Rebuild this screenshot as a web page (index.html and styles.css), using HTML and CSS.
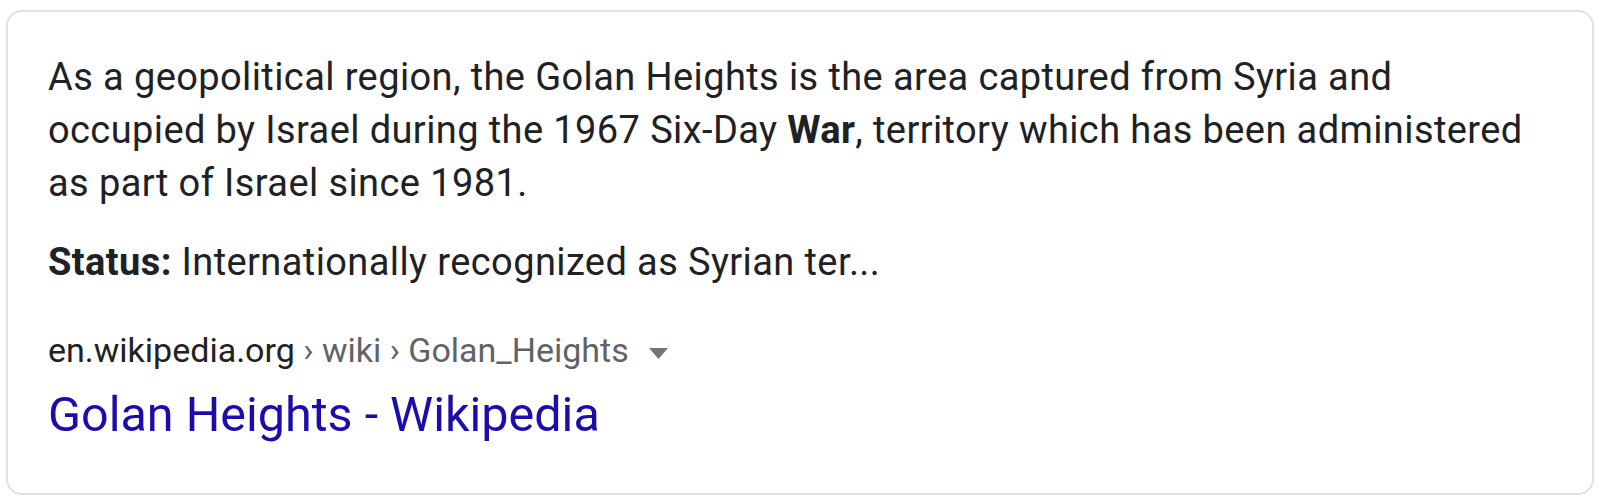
FILE: index.html
```html
<!DOCTYPE html>
<html lang="en">
<head>
<meta charset="utf-8">
<title>Golan Heights - Wikipedia</title>
<link rel="stylesheet" href="styles.css">
</head>
<body>
<div class="card">
  <p class="snippet">As a geopolitical region, the Golan Heights is the area captured from Syria and occupied by Israel during the 1967 Six-Day <b>War</b>, territory which has been administered as part of Israel since 1981.</p>
  <p class="status"><b>Status:</b> Internationally recognized as Syrian ter...</p>
  <div class="cite"><span class="domain">en.wikipedia.org</span><span class="path"> › wiki › Golan_Heights</span><svg class="caret" width="19" height="11" viewBox="0 0 19 11"><path d="M0 0H19L9.5 11Z" fill="#70757a"/></svg></div>
  <a class="title" href="#">Golan Heights - Wikipedia</a>
</div>
</body>
</html>
```
FILE: styles.css
```css
html, body {
  margin: 0;
  padding: 0;
  background: #fff;
}
body {
  padding: 10px 6px 7px 6px;
  font-family: Roboto, "Liberation Sans", Arial, sans-serif;
  color: #202124;
}
.card {
  box-sizing: border-box;
  height: 485px;
  border: 2px solid #dfe1e5;
  border-radius: 16px;
  padding: 39px 40px 0 40px;
}
.snippet {
  margin: 0;
  font-size: 38px;
  line-height: 53px;
  letter-spacing: 0.4px;
  max-width: 1482px;
}
.snippet b, .status b {
  font-weight: 700;
}
.status {
  margin: 26px 0 0 0;
  font-size: 38px;
  line-height: 53px;
  letter-spacing: 0.4px;
}
.cite {
  margin-top: 39px;
  font-size: 34px;
  line-height: 44px;
  white-space: nowrap;
}
.domain {
  color: #202124;
}
.path {
  color: #5f6368;
}
.caret {
  margin-left: 20px;
  vertical-align: middle;
}
.title {
  display: block;
  margin-top: 13px;
  font-size: 48.5px;
  line-height: 60px;
  color: #1a0dab;
  text-decoration: none;
}
```
